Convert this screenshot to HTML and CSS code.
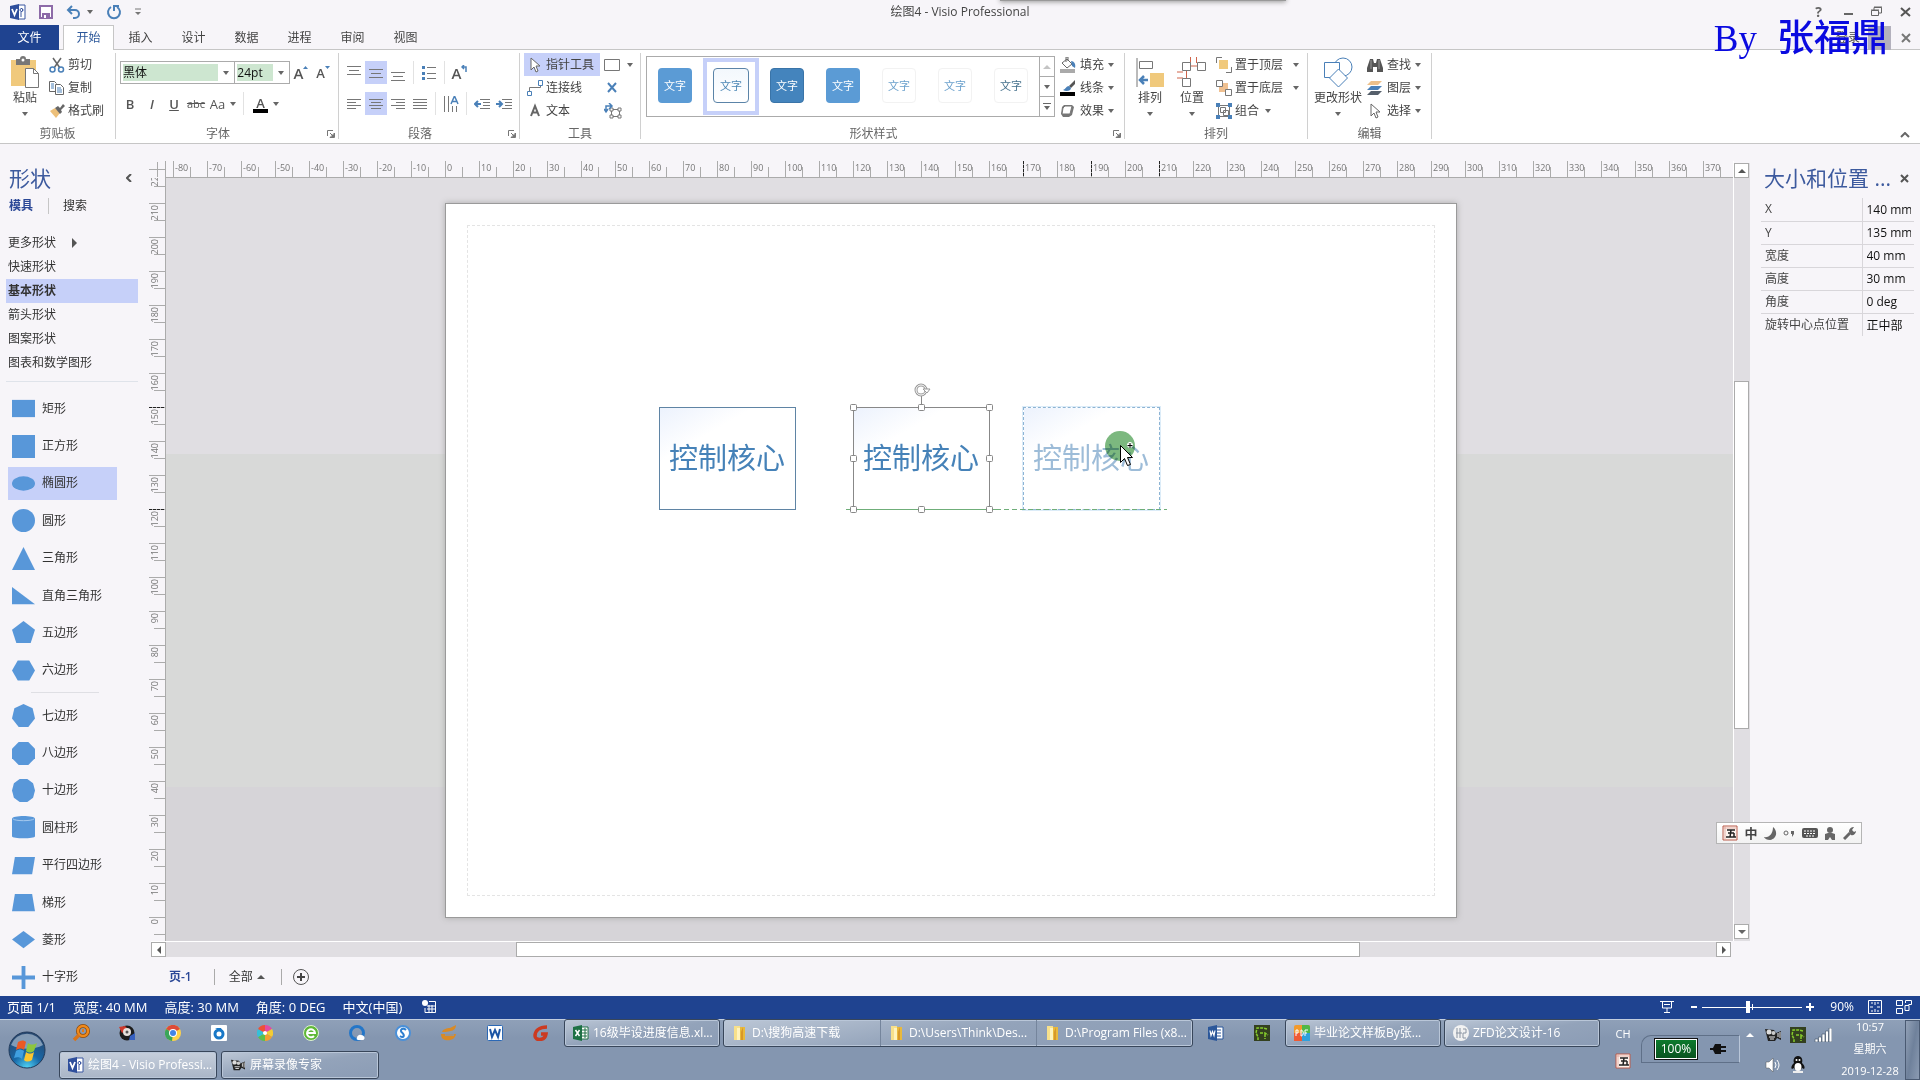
FILE: index.html
```html
<!DOCTYPE html>
<html lang="zh-CN">
<head>
<meta charset="utf-8">
<title>绘图4 - Visio Professional</title>
<link rel="stylesheet" href="styles.css">
</head>
<body>
<svg class="defs" aria-hidden="true">
  <symbol id="i-visio" viewBox="0 0 16 16"><path d="M8 1h7v14H8z" fill="#fff" stroke="#3a56a0"/><path d="M11 4l2 2-2 2M11 8v5" stroke="#3a56a0" fill="none"/><circle cx="11.500" cy="6" r="1.500" fill="none" stroke="#3a56a0"/><path d="M0 2l9-2v16l-9-2z" fill="#2f4f9c"/><path d="M2 5l2.500 6L7 5" stroke="#fff" stroke-width="1.800" fill="none"/></symbol>
  <symbol id="i-word" viewBox="0 0 16 16"><path d="M8 2h7v12H8z" fill="#fff" stroke="#2b579a"/><path d="M9 5h4M9 8h4M9 11h4" stroke="#2b579a"/><path d="M0 2l9-2v16l-9-2z" fill="#2b579a"/><path d="M2 5.500l1 5 1.500-4 1.500 4 1-5" stroke="#fff" stroke-width="1.200" fill="none"/></symbol>
  <symbol id="i-excel" viewBox="0 0 16 16"><path d="M8 2h7v12H8z" fill="#fff" stroke="#1e7145"/><path d="M9 5h5M9 8h5M9 11h5M12 3v10" stroke="#1e7145"/><path d="M0 2l9-2v16l-9-2z" fill="#1e7145"/><path d="M2.500 5l4 6m0-6l-4 6" stroke="#fff" stroke-width="1.500"/></symbol>
  <symbol id="i-folder" viewBox="0 0 16 16"><path d="M2 1h6l1 14H2z" fill="#f7e08b"/><path d="M8 2h5v13H8z" fill="#e9b93c"/><path d="M5 3h3v12H5z" fill="#fff3bd"/><path d="M9 7l2-5v13H9z" fill="#d8982a"/></symbol>
  <symbol id="i-snake" viewBox="0 0 16 16"><path d="M0 0h16v16H0z" fill="#33401f"/><path d="M13 4L9 3H3L2 8l2 4v3M6 8h5l3 2M11 9v5" fill="none" stroke="#86cc2c" stroke-width="1.500" stroke-dasharray="3 1"/></symbol>
  <symbol id="i-camera" viewBox="0 0 18 16"><path d="M1 2l9 1 2 3 5-2v9l-4-2-2 3H4z" fill="#222"/><circle cx="5" cy="5" r="2.500" fill="#ddd"/><circle cx="9.500" cy="6" r="2" fill="#ccc"/><path d="M5 10h6M6 12h4M14 6v4M16 5v6" stroke="#eee"/></symbol>
  <symbol id="i-wubi" viewBox="0 0 16 16"><path d="M1 1h14v14H1z" fill="#fdf3ee" stroke="#b95a4a"/><path d="M5 5h8M6 8h6M4 12h10M9 5l-1 7M12 8v4" stroke="#222" stroke-width="1.500" fill="none"/><path d="M3 1v13M1 3h13" stroke="#d99a8c" stroke-width=".7"/></symbol>
  <symbol id="i-pointer" viewBox="0 0 12 16"><path d="M2 1v12l3-3 2 5 2-1-2-5h4z" fill="#fff" stroke="#666"/></symbol>
  <symbol id="i-launch" viewBox="0 0 8 8"><path d="M.5 6V.5H6M3 3l3 3M7.500 3v4.500H3z" stroke="#777" fill="none"/><path d="M7 4v3H4z" fill="#777"/></symbol>
</svg>

<header class="titlebar">
  <div class="quick">
    <svg width="16" height="16"><use href="#i-visio"/></svg>
    <button aria-label="保存"><svg width="14" height="14"><path d="M1 1h12v12H1z" fill="#fff" stroke="#8d6ba8" stroke-width="2"/><path d="M3 8h8v5H3z" fill="#8d6ba8"/><path d="M5 10h2v3H5z" fill="#fff"/></svg></button>
    <button aria-label="撤消"><svg width="16" height="14"><path d="M2 5h7a4 4 0 0 1 0 8H7M6 1L2 5l4 4" fill="none" stroke="#4a80b8" stroke-width="2"/></svg><i class="caret"></i></button>
    <button aria-label="重复"><svg width="16" height="16"><path d="M5 3a6 6 0 1 0 6 0" fill="none" stroke="#4a80b8" stroke-width="2"/><path d="M8 7V2h5" fill="none" stroke="#4a80b8" stroke-width="2"/></svg></button>
    <button aria-label="自定义"><svg width="6" height="8"><path d="M0 1h6" stroke="#777"/><path d="M0 4h6L3 7z" fill="#777"/></svg></button>
  </div>
  <h1>绘图4 - Visio Professional</h1>
  <div class="winbtns">
    <button aria-label="帮助"><b>?</b></button>
    <button aria-label="最小化"><svg width="10" height="10"><path d="M1 7h9" stroke="#666" stroke-width="2"/></svg></button>
    <button aria-label="还原"><svg width="11" height="11"><path d="M.5 4.500h7v5h-7zM3 4V1.500h7.500V7H8" fill="none" stroke="#666"/><path d="M0 4h8M3 1h8" stroke="#666"/></svg></button>
    <button aria-label="关闭"><svg width="11" height="10"><path d="M1 1l9 8M10 1L1 9" stroke="#555" stroke-width="2"/></svg></button>
  </div>
  <div class="topshadow"></div>
</header>

<nav class="tabs">
  <button class="file">文件</button><button class="active">开始</button><button>插入</button><button>设计</button><button>数据</button><button>进程</button><button>审阅</button><button>视图</button>
  <div class="account"><a href="#">登录</a><span class="avatar"></span><button aria-label="关闭文档"><svg width="10" height="10"><path d="M1 1l8 8M9 1L1 9" stroke="#777" stroke-width="2"/></svg></button></div>
  <div class="author"><span>By</span><span>张福鼎</span></div>
</nav>

<section class="ribbon">
  <div class="group g-clip"><div class="body">
    <button class="big"><svg width="30" height="32"><path d="M1 4h25v26H1z" fill="#f0c97c"/><path d="M6 3h4a3 3 0 0 1 6 0h4v6H6z" fill="#777"/><circle cx="13" cy="4" r="1.500" fill="#fff"/><path d="M15.500 12.500h8l5 5v14h-13z" fill="#fff" stroke="#777"/><path d="M23.500 12.500v5h5" fill="none" stroke="#777"/></svg><span>粘贴</span><i class="caret"></i></button>
    <div class="stack">
      <button><svg width="16" height="16"><path d="M4 1l7 10M12 1L5 11" stroke="#666" stroke-width="1.500"/><circle cx="3.500" cy="12.500" r="2.500" fill="none" stroke="#4a80b8" stroke-width="1.500"/><circle cx="12" cy="12.500" r="2.500" fill="none" stroke="#4a80b8" stroke-width="1.500"/></svg>剪切</button>
      <button><svg width="16" height="16"><path d="M7 11.500H.5v-10h5l2 2M6.500 4.500h5l3 3v7h-8z" fill="#fff" stroke="#666"/><path d="M2 4h3M2 6h3M2 8h3M8 8h4M8 10h5M8 12h5" stroke="#4a80b8"/></svg>复制</button>
      <button><svg width="16" height="16"><path d="M1 8l5-3 5 5-4 5z" fill="#edc07a"/><path d="M6 5l3-2 2 2 3-4 2 2-4 4 1 2-2 2z" fill="#666"/></svg>格式刷</button>
    </div></div><div class="label"><span>剪贴板</span></div></div>

  <div class="group g-font"><div class="body rows">
    <div class="row"><label class="combo name"><select aria-label="字体"><option>黑体</option></select><i class="caret"></i></label><label class="combo size"><select aria-label="字号"><option>24pt</option></select><i class="caret"></i></label>
      <button class="ic" aria-label="增大字号"><b class="big-a">A</b><svg width="5" height="14"><path d="M0 3l2.500-3L5 3z" fill="#4a80b8"/></svg></button><button class="ic" aria-label="减小字号"><b>A</b><svg width="5" height="14"><path d="M0 0h5L2.500 3z" fill="#4a80b8"/></svg></button></div>
    <div class="row"><button class="ic" aria-label="加粗"><b>B</b></button><button class="ic" aria-label="倾斜"><b><em>I</em></b></button><button class="ic" aria-label="下划线"><b><u>U</u></b></button><button class="ic" aria-label="删除线"><s>abc</s></button><button class="ic wide" aria-label="更改大小写">Aa<i class="caret"></i></button><span class="sep"></span><button class="ic wide last" aria-label="字体颜色"><b class="fcolor">A</b><i class="caret"></i></button></div>
    </div><div class="label"><span>字体</span><svg width="8" height="8"><use href="#i-launch"/></svg></div></div>

  <div class="group g-para"><div class="body rows">
    <div class="row"><button class="ic" aria-label="顶端对齐"><svg width="14" height="16"><path d="M0 1.500h14M2 5.500h10M0 9.500h14" stroke="#777"/></svg></button><button class="ic on" aria-label="中部对齐"><svg width="14" height="16"><path d="M0 4.500h14M2 8.500h10M0 12.500h14" stroke="#777"/></svg></button><button class="ic" aria-label="底端对齐"><svg width="14" height="16"><path d="M0 7.500h14M2 11.500h10M0 15.500h14" stroke="#777"/></svg></button><span class="sep"></span><button class="ic" aria-label="项目符号"><svg width="14" height="16"><path d="M5 2.500h9M5 8.500h9M5 13.500h9" stroke="#777"/><path d="M0 1h3v3H0zM0 7h3v3H0zM0 12h3v3H0z" fill="#4a80b8"/></svg></button><span class="sep"></span><button class="ic" aria-label="旋转文本"><b class="big-a">A</b><svg width="7" height="16"><path d="M1 2h4v5M3 0L1 2l2 2" fill="none" stroke="#4a80b8" stroke-width="1.500"/></svg></button></div>
    <div class="row"><button class="ic" aria-label="左对齐"><svg width="14" height="12"><path d="M0 1.500h14M0 4.500h9M0 7.500h14M0 10.500h9" stroke="#777"/></svg></button><button class="ic on" aria-label="居中"><svg width="14" height="12"><path d="M0 1.500h14M2 4.500h10M0 7.500h14M2 10.500h10" stroke="#777"/></svg></button><button class="ic" aria-label="右对齐"><svg width="14" height="12"><path d="M0 1.500h14M5 4.500h9M0 7.500h14M5 10.500h9" stroke="#777"/></svg></button><button class="ic" aria-label="两端对齐"><svg width="14" height="12"><path d="M0 1.500h14M0 4.500h14M0 7.500h14M0 10.500h14" stroke="#777"/></svg></button><span class="sep"></span><button class="ic" aria-label="文字方向"><svg width="16" height="16"><path d="M1.500 0v16M5.500 0v16M9.500 10v6M13.500 10v6" stroke="#777"/><path d="M8 8l3.500-8L15 8M9 5.500h5" stroke="#4a80b8" stroke-width="1.500" fill="none"/></svg></button><span class="sep"></span><button class="ic" aria-label="减少缩进"><svg width="16" height="12"><path d="M6 1.500h10M9 4.500h7M9 7.500h7M6 10.500h10" stroke="#777"/><path d="M7 6H1M4 3L1 6l3 3" stroke="#4a80b8" stroke-width="2" fill="none"/></svg></button><button class="ic" aria-label="增加缩进"><svg width="16" height="12"><path d="M6 1.500h10M9 4.500h7M9 7.500h7M6 10.500h10" stroke="#777"/><path d="M0 6h6M3 3l3 3-3 3" stroke="#4a80b8" stroke-width="2" fill="none"/></svg></button></div>
    </div><div class="label"><span>段落</span><svg width="8" height="8"><use href="#i-launch"/></svg></div></div>

  <div class="group g-tools"><div class="body">
    <div class="stack">
      <button class="on"><svg width="16" height="16"><use href="#i-pointer"/></svg>指针工具</button>
      <button><svg width="16" height="16"><path d="M2.500 11V7.500h11V6" fill="none" stroke="#777"/><path d="M.5 11.500h4v4h-4zM11.500.5h4v5h-4z" fill="none" stroke="#4a80b8"/></svg>连接线</button>
      <button><svg width="16" height="16"><path d="M4 13l4-10 4 10M5 9.500h6" stroke="#666" stroke-width="2" fill="none"/></svg>文本</button>
    </div>
    <div class="stack">
      <button aria-label="矩形"><svg width="16" height="12"><path d="M.5.500h15v11H.5z" fill="#fff" stroke="#777"/></svg><i class="caret"></i></button>
      <button aria-label="连接点"><svg width="16" height="12"><path d="M4 1l8 9M12 1l-8 9" stroke="#4a80b8" stroke-width="2"/></svg></button>
      <button aria-label="文本块"><svg width="18" height="16"><path d="M7.500 6.500h8v7h-8z" fill="none" stroke="#777"/><path d="M6 5h3v3H6zM14 5h3v3h-3zM6 12h3v3H6zM14 12h3v3h-3z" fill="#fff" stroke="#777"/><path d="M2 8V3h5M5 0l3 3-3 3M0 6l2 3 2-3" fill="none" stroke="#4a80b8" stroke-width="1.500"/></svg></button>
    </div></div><div class="label"><span>工具</span></div></div>

  <div class="group g-styles"><div class="body">
    <div class="gallery">
      <button class="s1">文字</button><button class="s2 sel">文字</button><button class="s3">文字</button><button class="s1">文字</button><button class="s5">文字</button><button class="s6">文字</button><button class="s7">文字</button>
      <div class="gscroll"><button class="dim" aria-label="上一行"><i class="caret up"></i></button><button aria-label="下一行"><i class="caret"></i></button><button aria-label="更多样式"><svg width="8" height="8"><path d="M0 .5h8" stroke="#666"/><path d="M1 3h6L4 7z" fill="#666"/></svg></button></div>
    </div>
    <div class="stack">
      <button><svg width="16" height="16"><path d="M2 6l5-4 5 5-5 4z" fill="#fff" stroke="#666"/><path d="M6 5V0h2v4" fill="none" stroke="#666"/><path d="M11 4c3 0 5 3 4 7l-3-2z" fill="#4a80b8"/><path d="M0 12h15v4H0z" fill="#aaa"/></svg>填充<i class="caret"></i></button>
      <button><svg width="16" height="16"><path d="M15 0L9 6l2 2 4-4z" fill="#555"/><path d="M9 6c-3 0-3 3-6 4 3 2 8 1 8-2z" fill="#4a80b8"/><path d="M0 12h15v4H0z" fill="#000"/></svg>线条<i class="caret"></i></button>
      <button><svg width="16" height="16"><path d="M4 2h8l2 2-2 8-3 2H3l-2-3 1-7z" fill="#777"/><path d="M5 3h7l-2 8H2l1-6z" fill="#fff" stroke="#777"/></svg>效果<i class="caret"></i></button>
    </div></div><div class="label"><span>形状样式</span><svg width="8" height="8"><use href="#i-launch"/></svg></div></div>

  <div class="group g-arr"><div class="body">
    <button class="big"><svg width="28" height="32"><path d="M1 2v29" stroke="#777"/><path d="M3.500 5.500h13v7h-13z" fill="#fff" stroke="#777"/><path d="M14 17h14v14H14z" fill="#f0c97c"/><path d="M12 24H4M8 20l-4 4 4 4" stroke="#4a80b8" stroke-width="2.500" fill="none"/></svg><span>排列</span><i class="caret"></i></button>
    <button class="big"><svg width="30" height="32"><path d="M13 10h7M13.500 1v6M19.500 1v6M9.500 14v8M0 16h6M0 22h6" stroke="#d0644a"/><path d="M5.500 6.500h8v8h-8zM20.500 6.500h8v8h-8zM5.500 22.500h8v8h-8z" fill="#fff" stroke="#777"/></svg><span>位置</span><i class="caret"></i></button>
    <div class="stack">
      <button><svg width="16" height="16"><path d="M3 3h9v9H3z" fill="#f0c97c"/><path d="M.5 6V.500H6M15.500 10v5.500H10" fill="none" stroke="#777"/></svg>置于顶层<i class="caret far"></i></button>
      <button><svg width="16" height="16"><path d="M3 3h9v9H3z" fill="#f0c090"/><path d="M.5.500h6v6h-6zM9.500 9.500h6v6h-6z" fill="#fff" stroke="#777"/></svg>置于底层<i class="caret far"></i></button>
      <button><svg width="16" height="16"><path d="M2.500 2.500h11v11h-11zM4.500 4.500h5v5h-5zM7.500 7.500h5v5h-5z" fill="none" stroke="#777"/><path d="M0 0h4v4H0zM12 0h4v4h-4zM0 12h4v4H0zM12 12h4v4h-4z" fill="#4a80b8"/></svg>组合<i class="caret"></i></button>
    </div></div><div class="label"><span>排列</span></div></div>

  <div class="group g-edit"><div class="body">
    <button class="big"><svg width="30" height="32"><circle cx="20" cy="11" r="9" fill="#fff" stroke="#4a80b8"/><path d="M1.500 6.500h15v15h-15z" fill="#fff" stroke="#4a80b8"/><path d="M15.500 13l9 9-9 9-9-9z" fill="#fff" stroke="#4a80b8"/></svg><span>更改形状</span><i class="caret"></i></button>
    <div class="stack">
      <button><svg width="16" height="14"><path d="M3 1h3l1 4h2l1-4h3l3 9v4h-6V9H6v5H0v-4z" fill="#555"/><path d="M4 2v9M12 2v9" stroke="#999"/></svg>查找<i class="caret"></i></button>
      <button><svg width="16" height="16"><path d="M0 15l4-4h11l-4 4z" fill="#555f6b"/><path d="M0 10l4-4h11l-4 4z" fill="#4a80b8"/><path d="M0 5l4-4h11l-4 4z" fill="#edc08a"/></svg>图层<i class="caret"></i></button>
      <button><svg width="16" height="16"><use href="#i-pointer"/></svg>选择<i class="caret"></i></button>
    </div></div><div class="label"><span>编辑</span></div></div>
  <button class="collapse" aria-label="折叠功能区"><svg width="10" height="6"><path d="M1 5l4-4 4 4" fill="none" stroke="#666" stroke-width="2"/></svg></button>
</section>

<main class="work">
  <aside class="shapes">
    <div class="phead"><h2>形状</h2><button aria-label="折叠"><svg width="6" height="8"><path d="M5 0L1 4l4 4" fill="none" stroke="#555" stroke-width="2"/></svg></button></div>
    <div class="ptabs"><button class="cur">模具</button><button>搜索</button></div>
    <ul class="stencils"><li>更多形状<i class="tri"></i></li><li>快速形状</li><li class="on">基本形状</li><li>箭头形状</li><li>图案形状</li><li>图表和数学图形</li></ul>
    <ul class="masters">
      <li><svg viewBox="0 0 24 24"><path d="M0 3h24v18H0z"/></svg>矩形</li>
      <li><svg viewBox="0 0 24 24"><path d="M0 0h24v24H0z"/></svg>正方形</li>
      <li class="on"><svg viewBox="0 0 24 24"><ellipse cx="12" cy="12" rx="12" ry="7.500"/></svg>椭圆形</li>
      <li><svg viewBox="0 0 24 24"><circle cx="12" cy="12" r="12"/></svg>圆形</li>
      <li><svg viewBox="0 0 24 24"><path d="M12 0l12 24H0z"/></svg>三角形</li>
      <li><svg viewBox="0 0 24 24"><path d="M0 3l24 18H0z"/></svg>直角三角形</li>
      <li><svg viewBox="0 0 24 24"><path d="M12 0l12 9-4.500 14h-15L0 9z"/></svg>五边形</li>
      <li><svg viewBox="0 0 24 24"><path d="M6 1.500h12L24 12l-6 10.500H6L0 12z"/></svg>六边形</li>
    </ul>
    <hr>
    <ul class="masters">
      <li><svg viewBox="0 0 24 24"><path d="M12 0l9.500 4.500L24 15l-7 9H7l-7-9L2.500 4.500z"/></svg>七边形</li>
      <li><svg viewBox="0 0 24 24"><path d="M7 0h10l7 7v10l-7 7H7l-7-7V7z"/></svg>八边形</li>
      <li><svg viewBox="0 0 24 24"><path d="M8 0h8l6 4.500 2 7.500-2 7.500-6 4.500H8l-6-4.500L0 12l2-7.500z"/></svg>十边形</li>
      <li><svg viewBox="0 0 24 24"><path d="M0 3c0-4 24-4 24 0v18c0 3-24 3-24 0z"/><path class="rim" d="M1 3c2 2.500 20 2.500 22 0"/></svg>圆柱形</li>
      <li><svg viewBox="0 0 24 24"><path d="M3 3h21l-3 18H0z"/></svg>平行四边形</li>
      <li><svg viewBox="0 0 24 24"><path d="M3 3h18l3 18H0z"/></svg>梯形</li>
      <li><svg viewBox="0 0 24 24"><path d="M12 3l12 9-12 9-12-9z"/></svg>菱形</li>
      <li><svg viewBox="0 0 24 24"><path d="M10 0h4v10h10v4H14v10h-4V14H0v-4h10z"/></svg>十字形</li>
    </ul>
  </aside>

  <section class="center">
    <svg class="corner" width="17" height="17"><path d="M8.500 1v15M0 8.500h16" stroke="#ababab"/><path d="M16.500 0v17" stroke="#ababab"/></svg>
    <div class="hruler" id="hruler"></div>
    <div class="vscroll"><button aria-label="向上"><i class="caret up"></i></button><span class="v1"></span><span class="thumb"></span><span class="v2"></span><button aria-label="向下"><i class="caret down"></i></button></div>
    <div class="vruler" id="vruler"></div>
    <div class="canvas">
      <div class="sheet">
        <div class="margin"></div>
        <div class="node n1">控制核心</div>
        <div class="node n2">控制核心</div>
        <div class="node n3">控制核心</div>
        <svg class="guides" viewBox="0 0 340 140" width="340" height="140">
          <path d="M7 126.500h150" stroke="#6fae79"/><path d="M157 126.500h171" stroke="#6fae79" stroke-dasharray="5 3"/>
          <path d="M82.500 24V11" stroke="#888"/><circle cx="82" cy="7" r="5" fill="none" stroke="#999" stroke-width="3"/><circle cx="82" cy="7" r="5" fill="none" stroke="#fff"/><path d="M84 6h7l-3 4z" fill="#fff" stroke="#999"/>
          <g fill="#fff" stroke="#888"><rect x="11.500" y="21.500" width="6" height="6" rx="1"/><rect x="79.500" y="21.500" width="6" height="6" rx="1"/><rect x="147.500" y="21.500" width="6" height="6" rx="1"/><rect x="11.500" y="72.500" width="6" height="6" rx="1"/><rect x="147.500" y="72.500" width="6" height="6" rx="1"/><rect x="11.500" y="123.500" width="6" height="6" rx="1"/><rect x="79.500" y="123.500" width="6" height="6" rx="1"/><rect x="147.500" y="123.500" width="6" height="6" rx="1"/></g>
          <circle class="halo" cx="281" cy="63" r="15" fill="#7cb87f"/>
          <path d="M281.500 62.500v17l4-4 3 7 3-1-3-7h5z" fill="#fff" stroke="#000"/><path d="M291 59v6M288 62h6" stroke="#fff" stroke-width="3"/><path d="M291 60v5M288.500 62.500h5" stroke="#000"/>
        </svg>
      </div>
    </div>
    <div class="hscroll"><button aria-label="向左"><i class="caret left"></i></button><span class="h1"></span><span class="thumb"></span><span class="h2"></span><button aria-label="向右"><i class="caret right"></i></button></div>
    <div class="pages"><button class="cur">页-1</button><button>全部<i class="caret up"></i></button><button aria-label="插入页"><svg width="18" height="18"><circle cx="9" cy="9" r="7.500" fill="none" stroke="#555"/><path d="M9 5v8M5 9h8" stroke="#444" stroke-width="2"/></svg></button></div>
  </section>

  <aside class="sizepos">
    <div class="phead"><h2>大小和位置 ...</h2><button aria-label="关闭"><svg width="9" height="9"><path d="M1 1l7 7M8 1L1 8" stroke="#555" stroke-width="2"/></svg></button></div>
    <table>
      <tr><th><label for="px">X</label></th><td><input id="px" value="140 mm"></td></tr>
      <tr><th><label for="py">Y</label></th><td><input id="py" value="135 mm"></td></tr>
      <tr><th><label for="pw">宽度</label></th><td><input id="pw" value="40 mm"></td></tr>
      <tr><th><label for="ph">高度</label></th><td><input id="ph" value="30 mm"></td></tr>
      <tr><th><label for="pa">角度</label></th><td><input id="pa" value="0 deg"></td></tr>
      <tr><th><label for="pp">旋转中心点位置</label></th><td><input id="pp" value="正中部"></td></tr>
    </table>
  </aside>
</main>

<footer class="status">
  <span>页面 1/1</span><span>宽度: 40 MM</span><span>高度: 30 MM</span><span>角度: 0 DEG</span><span>中文(中国)</span>
  <svg width="14" height="14"><circle cx="3" cy="3" r="3" fill="#fff"/><path d="M7 1.500h6.500v11H3V8" fill="none" stroke="#fff"/><path d="M5 6h8M5 9h8M7 5v7M10 5v7" stroke="#fff"/></svg>
  <div class="zoom">
    <svg width="14" height="14"><path d="M0 1.500h14M2.500 2v6h9V2M7 8v5M4 12.500h6M4 4.500h6" fill="none" stroke="#fff"/></svg>
    <button class="pm" aria-label="缩小"><svg width="8" height="8"><path d="M1 4h6" stroke="#fff" stroke-width="2"/></svg></button>
    <input type="range" min="0" max="100" value="45" aria-label="缩放">
    <button class="pm" aria-label="放大"><svg width="8" height="8"><path d="M0 4h8M4 0v8" stroke="#fff" stroke-width="2"/></svg></button>
    <span class="pct">90%</span>
    <svg width="14" height="14"><path d="M.5.500h13v13H.5z" fill="none" stroke="#fff"/><path d="M7 2v3M7 9v3M2 7h3M9 7h3M3 3h2M9 3h2M3 11h2M9 11h2" stroke="#fff"/></svg>
    <svg width="16" height="14"><path d="M.5.500h6v5h-6zM9.500 3V.500h6v4h-3M3 8.500H.5v5h6v-5zM9 5.500h4v5H9z" fill="none" stroke="#fff"/></svg>
  </div>
</footer>

<div class="taskbar">
  <button class="orb" aria-label="开始"><svg width="38" height="38"><defs><radialGradient id="og" cx=".5" cy="1" r=".9"><stop offset="0" stop-color="#52d6f6"/><stop offset=".45" stop-color="#1768a8"/><stop offset="1" stop-color="#284a73"/></radialGradient></defs><circle cx="19" cy="19" r="18" fill="url(#og)" stroke="#223a5a"/><path d="M3 14a17 17 0 0 1 32 0c-9 5-22 5-32 0z" fill="#a9bccf" opacity=".7"/><path d="M10 11c3-2 6-2 8 0l-2 8c-2-2-5-2-8 0z" fill="#ec5a24"/><path d="M20 12c3 2 5 2 9 0l-3 8c-3 2-5 2-8 0z" fill="#8cc63f"/><path d="M8 20c3-2 5-2 8 0l-2 8c-2-2-5-2-8-1z" fill="#3f9fe0"/><path d="M18 21c3 2 5 2 8 0l-2 8c-3 2-6 2-8 0z" fill="#fdc62e"/></svg></button>
  <div class="tasks">
    <div class="trow">
      <button class="q" aria-label="搜索"><svg width="18" height="18"><circle cx="11" cy="7" r="5" fill="none" stroke="#8a4a10" stroke-width="4"/><circle cx="11" cy="7" r="5" fill="none" stroke="#f08a1c" stroke-width="2.500"/><path d="M10 5h2v3h-2z" fill="#e87c14"/><path d="M7 11l-5 5" stroke="#d8741a" stroke-width="3.500"/></svg></button>
      <button class="q" aria-label="播放器"><svg width="18" height="18"><circle cx="9" cy="9" r="7.500" fill="#1c1c1c"/><path d="M1 3l6-1 3 3-6 4z" fill="#d03a2c"/><path d="M17 9v7h-6l1-4z" fill="#3660c0"/><circle cx="9" cy="8" r="4" fill="#e6e0dc"/><circle cx="9" cy="8" r="1.500" fill="#555"/></svg></button>
      <button class="q" aria-label="Chrome"><svg width="16" height="16"><circle cx="8" cy="8" r="8" fill="#ffd24a"/><path d="M8 8L1 4a8 8 0 0 1 14 0z" fill="#dd4b39"/><path d="M8 8l-1 8A8 8 0 0 1 1 4z" fill="#3ba55a"/><circle cx="8" cy="8" r="4" fill="#fff"/><circle cx="8" cy="8" r="3" fill="#4384e8"/></svg></button>
      <button class="q" aria-label="百度网盘"><svg width="16" height="16"><rect width="16" height="16" rx="1" fill="#fff"/><circle cx="8" cy="9" r="4" fill="none" stroke="#1878c8" stroke-width="3"/><path d="M4 3h6l2 4z" fill="#1878c8"/></svg></button>
      <button class="q" aria-label="360"><svg width="16" height="16"><path d="M8 8V0a8 8 0 0 1 7 4z" fill="#e34ba0"/><path d="M8 8l7-4a8 8 0 0 1 0 8z" fill="#f2cc35"/><path d="M8 8l7 4a8 8 0 0 1-7 4z" fill="#f0a030"/><path d="M8 8v8a8 8 0 0 1-7-4z" fill="#5cc04a"/><path d="M8 8l-7 4a8 8 0 0 1 0-8z" fill="#35c0d8"/><path d="M8 8L1 4a8 8 0 0 1 7-4z" fill="#ee5036"/><circle cx="8" cy="8" r="2" fill="#fff"/></svg></button>
      <button class="q" aria-label="浏览器"><svg width="16" height="16"><circle cx="8" cy="8" r="7.500" fill="#5fb838" stroke="#dff2d4"/><path d="M4 8h8a4 4 0 1 0-1 3" fill="none" stroke="#fff" stroke-width="2"/></svg></button>
      <button class="q" aria-label="QQ浏览器"><svg width="16" height="16"><circle cx="8" cy="8" r="6.500" fill="none" stroke="#2476c8" stroke-width="3"/><path d="M8 13a3 3 0 0 1 4-3c4 0 5 5 1 5H9c-1 0-2-1-1-2z" fill="#fff"/></svg></button>
      <button class="q" aria-label="搜狗"><svg width="16" height="16"><circle cx="8" cy="8" r="7" fill="#fff" stroke="#4a90d9" stroke-width="2"/><path d="M11 5C8 2 4 5 7 7.500S9 14 5 11" fill="none" stroke="#2f7fd0" stroke-width="2"/></svg></button>
      <button class="q" aria-label="工具"><svg width="18" height="16"><path d="M2 7c1-3 5-4 8-4l6-3c0 5-4 7-14 7zM1 9h15c-1 5-5 7-11 6-3-1-4-3-4-6z" fill="#d98a26"/><path d="M5 10h9" stroke="#8796ae" stroke-width="1.500"/></svg></button>
      <button class="q" aria-label="Word"><svg width="16" height="16"><rect x=".5" y=".5" width="15" height="15" rx="1" fill="#fff" stroke="#2b68b5"/><path d="M3 4l2 8 3-7 3 7 2-8" fill="none" stroke="#1c55a5" stroke-width="2"/></svg></button>
      <button class="q" aria-label="金山"><svg width="16" height="16"><path d="M14 2C6 2 2 6 2 11c0 5 10 5 11-2H8" fill="none" stroke="#cc3a20" stroke-width="3.500"/></svg></button>
      <button class="task"><svg width="16" height="16"><use href="#i-excel"/></svg>16级毕设进度信息.xl...</button>
      <div class="cluster"><button><svg width="16" height="16"><use href="#i-folder"/></svg>D:\搜狗高速下载</button><button><svg width="16" height="16"><use href="#i-folder"/></svg>D:\Users\Think\Des...</button><button><svg width="16" height="16"><use href="#i-folder"/></svg>D:\Program Files (x8...</button></div>
      <button class="q" aria-label="Word 2013"><svg width="16" height="16"><use href="#i-word"/></svg></button>
      <button class="q" aria-label="录屏"><svg width="16" height="16"><use href="#i-snake"/></svg></button>
      <button class="task"><svg width="16" height="16"><rect width="16" height="16" rx="2" fill="#f29a2c"/><path d="M8 0h6a2 2 0 0 1 2 2v6H8z" fill="#4fb848"/><path d="M8 8h8v8H8z" fill="#30a0dc"/><path d="M0 8h8v8H0z" fill="#ee5a34"/><path d="M2 11V5h2v3H2M7 5v6c3 0 3-6 0-6M11 11V5h3M11 8h2" fill="none" stroke="#fff"/></svg>毕业论文样板By张...</button>
      <button class="task"><svg width="16" height="16"><circle cx="8" cy="8" r="8" fill="#f2f2f2"/><path d="M4 3v10M7 3v10M3 8h6M10 4h3v4h-3v5h3" stroke="#8a94a2" fill="none"/></svg>ZFD论文设计-16</button>
    </div>
    <div class="trow two"><button class="task cur"><svg width="16" height="16"><use href="#i-visio"/></svg>绘图4 - Visio Professi...</button><button class="task"><svg width="16" height="14"><use href="#i-camera"/></svg>屏幕录像专家</button></div>
  </div>
  <div class="lang"><span>CH</span><svg width="16" height="16"><use href="#i-wubi"/></svg></div>
  <div class="power"><span class="batt">100%</span><svg width="16" height="12"><path d="M0 5h3l2-4h6v2h5v2h-5v2h5v2h-5v2H5L3 7H0z" fill="#111"/></svg></div>
  <div class="tray">
    <svg width="10" height="6"><path d="M1 5h8L5 1z" fill="#fff"/></svg>
    <svg width="18" height="16"><use href="#i-camera"/></svg>
    <svg width="16" height="16"><use href="#i-snake"/></svg>
    <svg width="18" height="14"><path d="M1 11h3v3H1zM4.500 9h3v5h-3zM8 6h3v8H8zM11.500 3h3v11h-3zM15 0h3v14h-3z" fill="#fff" stroke="#4c5b70" stroke-width=".7"/></svg>
    <i></i>
    <svg width="16" height="16"><path d="M1 5h3l4-4v14l-4-4H1z" fill="#fff" stroke="#555" stroke-width=".5"/><path d="M10 5q2 3 0 6M12 3q4 5 0 10" fill="none" stroke="#fff"/></svg>
    <svg width="16" height="18"><path d="M8 0c4 0 5 4 4 7 3 3 3 5 2 6l-2-1c0 3-8 3-8 0l-2 1c-1-1-1-3 2-6-1-3 0-7 4-7z" fill="#111"/><ellipse cx="8" cy="11" rx="3.500" ry="4" fill="#fff"/><circle cx="6.500" cy="4" r="1" fill="#fff"/><circle cx="9.500" cy="4" r="1" fill="#fff"/><path d="M3 16h10" stroke="#eee" stroke-width="2"/></svg>
  </div>
  <div class="clock"><span>10:57</span><span>星期六</span><span>2019-12-28</span></div>
  <button class="desk" aria-label="显示桌面"></button>
</div>

<div class="ime">
  <svg width="16" height="16"><use href="#i-wubi"/></svg><span>中</span>
  <svg width="13" height="13"><path d="M9 0c5 4 4 12-3 13-3 0-5-1-6-3 5 1 9-3 9-10z" fill="#666"/></svg>
  <svg width="12" height="10"><circle cx="3" cy="5" r="2" fill="none" stroke="#666"/><path d="M8 3h3v3l-2 3V6H8z" fill="#666"/></svg>
  <svg width="16" height="10"><rect width="16" height="10" rx="2" fill="#555"/><path d="M2 3h12M2 5.500h12M4 8h8" stroke="#fff" stroke-dasharray="2 1"/></svg>
  <svg width="12" height="13"><circle cx="6" cy="3" r="3" fill="#666"/><path d="M1 7l3-1h4l3 1v6H8l-2-3-2 3H1z" fill="#666"/></svg>
  <svg width="13" height="13"><path d="M1 12l6-6" stroke="#666" stroke-width="3"/><path d="M6 5c0-4 3-5 5-5L9 3l2 2 2-1c0 3-3 5-5 4z" fill="#666"/></svg>
</div>
<script src="script.js"></script>
</body>
</html>
```
FILE: styles.css
```css
* { box-sizing: border-box; }
body { margin: 0; height: 100vh; min-height: 640px; display: flex; flex-direction: column; overflow: hidden; position: relative; background: #f7f5f9; color: #444; font: 12px/16px "Open Sans", "Noto Sans CJK SC", sans-serif; }
button, input, select { font: inherit; color: inherit; background: none; border: 0; padding: 0; margin: 0; border-radius: 0; outline: 0; }
button { display: flex; align-items: center; justify-content: center; white-space: nowrap; flex: none; }
svg { flex: none; display: block; }
h1, h2 { margin: 0; font-weight: 400; }
ul { list-style: none; margin: 0; padding: 0; }
a { color: inherit; text-decoration: none; }
.defs { position: absolute; width: 0; height: 0; }
.caret { display: block; flex: none; width: 0; height: 0; border: solid transparent; border-width: 4px 3px 0; border-top-color: #666; }
.caret.down { border-width: 4px 4px 0; }
.caret.up { border-width: 0 4px 4px; border-color: transparent transparent #555; }
.caret.left { border-width: 4px 4px 4px 0; border-color: transparent #555 transparent transparent; }
.caret.right { border-width: 4px 0 4px 4px; border-color: transparent transparent transparent #555; }
.on { background: #c6d0f9; }

.titlebar { height: 25px; flex: none; display: grid; grid-template-columns: 1fr auto 1fr; align-items: center; position: relative; padding: 0 8px 2px; }
.titlebar h1 { font-size: 12px; line-height: 16px; }
.quick { display: flex; align-items: center; gap: 13px; padding-left: 2px; }
.quick button { gap: 5px; }
.winbtns { display: flex; justify-content: flex-end; }
.winbtns button { width: 29px; }
.winbtns button:last-child { margin-right: -8px; }
.winbtns b { font-size: 14px; color: #666; }
.topshadow { position: absolute; left: 1000px; top: -6px; width: 286px; height: 7px; background: #999; box-shadow: 0 1px 5px #999; }

.tabs { height: 25px; flex: none; display: flex; position: relative; z-index: 2; box-shadow: inset 0 -1px #c6c6c6; }
.tabs > button { width: 53px; }
.tabs .file { width: 59px; background: #1f4390; color: #fff; margin-right: 4px; }
.tabs .active { width: 51px; background: #fff; border: 1px solid #c6c6c6; border-bottom: 0; color: #2b579a; }
.account { margin-left: auto; display: flex; align-items: center; }
.avatar { width: 23px; height: 24px; background: #b3b1bd; margin: 0 0 0 8px; }
.account button { width: 29px; }
.author { position: absolute; right: 32px; top: -6px; display: flex; gap: 20px; font: 37px/40px "Liberation Serif", "Noto Sans CJK SC", serif; font-weight: 500; color: #0a0ae0; white-space: nowrap; }

.ribbon { height: 94px; flex: none; display: flex; background: #fff; border-bottom: 1px solid #c6c6c6; position: relative; }
.group { margin: 3px 0 4px; border-right: 1px solid #d0d0d0; display: flex; flex-direction: column; flex: none; }
.group .body { height: 69px; display: flex; }
.label { display: flex; height: 17px; padding-top: 6px; line-height: 14px; align-items: center; color: #666; }
.label span { flex: 1; text-align: center; }
.label svg { margin: 0 3px 0 7px; }
.g-clip { width: 116px; } .g-font { width: 223px; } .g-para { width: 181px; } .g-tools { width: 121px; } .g-styles { width: 484px; } .g-arr { width: 183px; } .g-edit { width: 124px; }
.big { flex-direction: column; justify-content: flex-start; width: 42px; padding-top: 3px; }
.big span { line-height: 16px; margin: 2px 0 6px; }
.stack { display: flex; flex-direction: column; }
.stack button { height: 23px; justify-content: flex-start; gap: 3px; }
.g-clip .body { padding-left: 4px; }
.g-clip .stack { padding-left: 3px; }
.body.rows { flex-direction: column; gap: 8px; padding: 8px 4px 0; }
.row { display: flex; height: 23px; }
.ic { width: 22px; color: #555; }
.ic.wide { width: 32px; gap: 5px; }
.ic b { font-size: 13px; line-height: 16px; font-weight: 600; }
.ic .big-a { font-size: 15px; }
.ic s { font-size: 11px; }
.ic.wide { font-size: 13px; }
.g-font .row + .row { margin-left: -1px; }
.ic.wide.last { width: 36px; }
.fcolor { border-bottom: 4px solid #000; width: 15px; height: 18px; text-align: center; }
.sep { width: 1px; margin: 0 4px; background: #e2e2e2; }
.combo { border: 1px solid #ababab; display: flex; align-items: center; padding: 2px 5px 2px 2px; background: #fff; color: #111; }
.combo select { appearance: none; flex: 1; min-width: 0; height: 17px; background: #cde6d0; margin-right: 5px; }
.combo.name { width: 116px; } .combo.size { width: 56px; margin-left: -1px; }
.g-tools .body { padding-left: 4px; }
.g-tools .stack:first-child { width: 76px; }
.g-tools .stack:first-child button { padding-left: 3px; }
.g-tools .stack + .stack { padding-left: 4px; }
.g-tools .stack + .stack button { gap: 7px; }
.g-styles .body { padding-left: 5px; }
.gallery { display: flex; width: 409px; height: 61px; margin: 3px 5px 0 0; border: 1px solid #ababab; }
.gallery > button { width: 56px; position: relative; color: #fff; font-size: 11px; z-index: 0; padding-bottom: 2px; }
.gallery > button::before { content: ""; position: absolute; inset: 11px 11px 13px; border-radius: 4px; z-index: -1; background: #5b9bd5; }
.gallery .sel { border: 4px solid #c6d0f9; margin: 1px 0; color: #4a86b4; }
.gallery .sel::before { inset: 6px 6px 8px; background: linear-gradient(#f3f8fd, #fff); border: 1px solid #5b84a8; }
.gallery .s3::before { background: #4484bd; border: 1px solid #3a74a8; }
.gallery .s5, .gallery .s6 { color: #6aa0cc; }
.gallery .s7 { color: #44708c; }
.gallery .s5::before, .gallery .s6::before, .gallery .s7::before { background: #fff; border: 1px solid #f2f2f2; }
.gscroll { flex: 1; display: flex; flex-direction: column; border-left: 1px solid #ababab; }
.gscroll button { flex: 1; }
.gscroll button + button { border-top: 1px solid #ababab; }
.dim { opacity: .35; }
.g-styles .stack button, .g-edit .stack button { gap: 4px; }
.g-arr .body, .g-edit .body { padding-left: 4px; }
.g-arr .stack { padding-left: 3px; }
.g-arr .stack .caret { margin-left: 3px; }
.g-arr .stack .far { margin-left: 7px; }
.g-edit .big { width: 52px; }
.g-edit .stack { padding-left: 3px; }
.collapse { position: absolute; right: 10px; bottom: 5px; }

.work { flex: 1; min-height: 0; display: flex; }
.shapes { width: 149px; flex: none; overflow: hidden; color: #333; }
.phead { display: flex; justify-content: space-between; align-items: center; }
.phead h2 { font-size: 21px; line-height: 28px; color: #3d5a9e; }
.shapes .phead { padding: 20px 17px 0 9px; }
.ptabs { display: flex; padding-left: 9px; line-height: 16px; margin-top: 6px; }
.ptabs .cur { color: #2a4796; font-weight: 600; padding-right: 15px; border-right: 1px solid #c6c6c6; margin-right: 14px; }
.stencils { margin: 17px 11px 0 6px; padding-bottom: 6px; border-bottom: 1px solid #dfe3ea; }
.stencils li { height: 24px; padding-left: 2px; display: flex; align-items: center; }
.stencils .on { font-weight: 600; }
.tri { border: solid transparent; border-width: 5px 0 5px 5px; border-left-color: #555; margin-left: 16px; }
.masters { height: 299px; display: grid; grid-auto-rows: 1fr; margin: 8px 0 0 8px; }
.masters li { display: flex; align-items: center; gap: 7px; padding-left: 4px; width: 109px; margin: 2px 0; }
.masters svg { width: 23px; height: 23px; fill: #5897d9; }
.masters .rim { fill: none; stroke: #a8cbee; }
.shapes hr { border: 0; height: 1px; background: #dfdfe4; margin: 3px 50px 4px 31px; }
.shapes hr + .masters { margin-top: 0; }

.center { flex: 1; min-width: 0; display: grid; grid-template-columns: 17px minmax(0, 1fr) 17px; grid-template-rows: 17px minmax(0, 1fr) 16px 39px; padding-top: 17px; }
.hruler { display: flex; overflow: hidden; border-bottom: 1px solid #ababab; padding-left: 7px; }
.hruler span { flex: none; width: 34px; padding-left: 2px; font-size: 9px; line-height: 13px; color: #777; background: linear-gradient(#ababab, #ababab) 0 0 / 1px 17px no-repeat, linear-gradient(#ababab, #ababab) 17px 6px / 1px 11px no-repeat; }
.hruler .mark { background: repeating-linear-gradient(#222 0 3px, #ababab 3px 4px) 0 0 / 1px 17px no-repeat, linear-gradient(#ababab, #ababab) 17px 6px / 1px 11px no-repeat; }
.vruler { grid-column: 1; grid-row: 2; overflow: hidden; border-right: 1px solid #ababab; }
.vruler span { display: block; height: 34px; padding: 2px 0 0; font-size: 9px; line-height: 12px; color: #777; background: linear-gradient(#ababab, #ababab) 0 0 / 16px 1px no-repeat, linear-gradient(#ababab, #ababab) 5px 17px / 11px 1px no-repeat; }
.vruler span:first-child { margin-top: -9px; }
.vruler .mark { background: repeating-linear-gradient(90deg, #222 0 3px, #ababab 3px 4px) 0 0 / 16px 1px no-repeat, linear-gradient(#ababab, #ababab) 5px 17px / 11px 1px no-repeat; }
.vruler b { display: block; font-weight: 400; writing-mode: vertical-rl; transform: rotate(180deg); width: 12px; }
.vscroll { grid-column: 3; grid-row: 1 / 3; display: flex; flex-direction: column; padding: 2px 1px 2px 0; border-left: 1px solid #fff; background: linear-gradient(#f7f5f9 0 2px, #e0dee2 2px); }
.vscroll button, .hscroll button { width: 15px; height: 15px; border: 1px solid #ababab; background: #fff; }
.thumb { border: 1px solid #ababab; background: #fff; }
.vscroll .v1 { flex: 204; } .vscroll .thumb { flex: 346; } .vscroll .v2 { flex: 196; }
.hscroll { grid-column: 1 / 3; display: flex; margin: 0 2px; border-top: 1px solid #fff; background: #e0dee2; }
.hscroll .h1 { flex: 350; } .hscroll .thumb { flex: 844; } .hscroll .h2 { flex: 356; }
.canvas { grid-column: 2; grid-row: 2; overflow: hidden; display: flex; align-items: center; justify-content: center; padding: 2px 0 0 2px; background: linear-gradient(#e0dee2 0 36.200%, #d8d9d8 36.200% 79.800%, #d6d4d8 79.800%); }
.sheet { width: 1012px; height: 715px; flex: none; position: relative; background: #fff; border: 1px solid #9a9a9a; box-shadow: 0 0 6px #aaa; }
.margin { position: absolute; inset: 21px; border: 1px dashed #e4e4e4; }
.node { position: absolute; top: 203px; width: 137px; height: 103px; border: 1px solid #5f84a4; background: linear-gradient(150deg, #ecf2fd, #fff 30%); color: #4682b8; font-size: 29px; line-height: 100px; text-align: center; white-space: nowrap; }
.n1 { left: 213px; } .n2 { left: 407px; border-color: #888; }
.n3 { left: 577px; border: 1px dashed #8db4d4; color: #9dbcd8; outline: 1px solid #dcecf8; }
.guides { position: absolute; left: 393px; top: 179px; }
.halo { mix-blend-mode: multiply; }
.pages { grid-column: 1 / 4; display: flex; align-items: center; padding: 1px 0 0 20px; color: #333; }
.pages button { height: 16px; gap: 4px; }
.pages button + button { border-left: 1px solid #aaa; padding-left: 14px; margin-left: 16px; }
.pages button:last-child { padding-left: 10px; }
.pages .cur { color: #2a4796; font-weight: 600; padding-right: 6px; }

.sizepos { width: 170px; flex: none; overflow: hidden; }
.sizepos .phead { padding: 20px 11px 0 14px; }
.sizepos h2 { white-space: nowrap; }
.sizepos table { border-collapse: collapse; table-layout: fixed; width: 153px; margin: 6px 0 0 11px; }
.sizepos th, .sizepos td { height: 23px; padding: 0 4px; font-weight: 400; text-align: left; border-bottom: 1px solid #d8d6da; white-space: nowrap; line-height: 16px; }
.sizepos th { width: 101px; border-right: 1px solid #d8d6da; }
.sizepos tr:last-child > * { border-bottom: 0; }
.sizepos input { width: 44px; height: 18px; display: block; color: #111; }

.status { height: 23px; flex: none; display: flex; align-items: center; gap: 17px; padding: 0 8px 1px 7px; background: #1f4390; color: #fff; white-space: nowrap; font-size: 13px; }
.status > svg { margin-left: 3px; }
.zoom { margin-left: auto; display: flex; align-items: center; font-size: 12px; }
.zoom .pm { width: 8px; margin: 0 4px; }
.zoom > svg:first-child { margin-right: 12px; }
.pct { margin: 0 14px 0 12px; }
.zoom svg + svg { margin-left: 14px; }
.zoom input { appearance: none; width: 100px; height: 12px; background: linear-gradient(#fff, #fff) 0 6px / 100% 1px no-repeat, linear-gradient(#fff, #fff) 50px 3px / 1px 6px no-repeat; }
.zoom input::-webkit-slider-thumb { appearance: none; width: 4px; height: 12px; background: #fff; }

.taskbar { height: 61px; flex: none; display: flex; border-top: 1px solid #c3cede; background: linear-gradient(#8fa0b8, #8496b0 30%); color: #fff; }
.orb { width: 54px; }
.tasks { flex: 1; min-width: 0; display: flex; flex-direction: column; gap: 4px; padding-left: 4px; }
.trow { display: flex; height: 28px; margin-top: -1px; }
.trow.two { margin-top: 0; padding-left: 1px; gap: 4px; }
.q { width: 46px; }
.task, .cluster { border: 1px solid #38465a; border-radius: 3px; box-shadow: inset 0 0 0 1px #b9c6d8; background: linear-gradient(170deg, #bcc7d6, #93a3ba 50%, #8b9cb5); }
.task { width: 156px; justify-content: flex-start; gap: 4px; padding-left: 8px; overflow: hidden; margin-right: 3px; }
.two .task { width: 158px; margin: 0; }
.task.cur { background: linear-gradient(#c6cfdc, #a9b5c7); }
.cluster { display: flex; width: 470px; flex: none; }
.cluster button { width: 156px; justify-content: flex-start; gap: 4px; padding-left: 8px; }
.cluster button + button { border-left: 1px solid #75859c; }
.lang { width: 30px; display: flex; flex-direction: column; align-items: center; gap: 11px; padding-top: 5px; line-height: 17px; font-size: 11px; }
.power { width: 99px; height: 28px; margin: 15px 0 0 3px; border: 1px solid #5f7088; border-right-color: #b9c6d8; border-radius: 10px 0 0 0; display: flex; align-items: center; gap: 13px; padding-left: 13px; }
.batt { width: 42px; height: 20px; border: 1px solid #fff; outline: 1px solid #111; background: linear-gradient(#0c7a2c, #0a5420); line-height: 18px; text-align: center; }
.tray { display: grid; grid-template-columns: 20px 24px 24px 24px; grid-template-rows: 30px 30px; place-items: center; column-gap: 1px; }
.clock { width: 70px; display: flex; flex-direction: column; align-items: center; line-height: 22px; font-size: 11px; margin-top: -4px; }
.desk { width: 15px; border: 1px solid #4a5a72; background: linear-gradient(100deg, #93a2b7, #6f819b 50%, #8b9bb2); }

.ime { position: absolute; right: 58px; bottom: 236px; width: 146px; height: 22px; display: flex; align-items: center; justify-content: space-between; padding: 0 5px; border: 1px solid #b5b5b5; background: linear-gradient(#fff, #f2f2f2); color: #444; }
.ime span { font-size: 13px; font-weight: 600; }
```
FILE: script.js
```js
// Fill a ruler with labelled ticks, ten drawing units apart.
function fillRuler(id, from, to, step, marks, tag) {
  const ruler = document.getElementById(id);
  for (let v = from; step > 0 ? v <= to : v >= to; v += step) {
    const tick = document.createElement('span');
    if (marks.includes(v)) tick.className = 'mark';
    const label = tag ? tick.appendChild(document.createElement(tag)) : tick;
    label.textContent = v;
    ruler.appendChild(tick);
  }
}
fillRuler('hruler', -80, 370, 10, [170, 190, 210], null);
fillRuler('vruler', 220, 0, -10, [150, 120], 'b');
```
